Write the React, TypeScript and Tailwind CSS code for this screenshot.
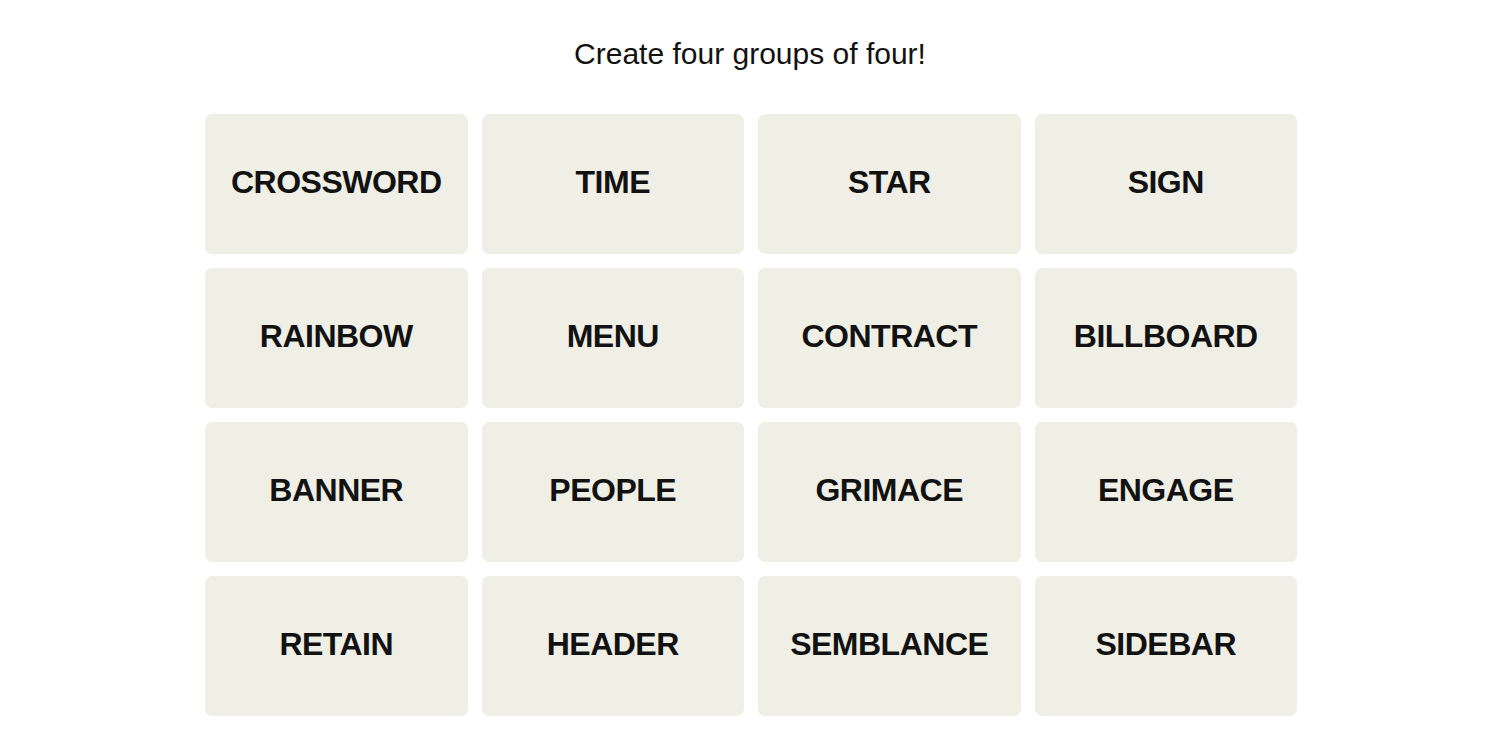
import React from "react";

const words = [
  "CROSSWORD", "TIME", "STAR", "SIGN",
  "RAINBOW", "MENU", "CONTRACT", "BILLBOARD",
  "BANNER", "PEOPLE", "GRIMACE", "ENGAGE",
  "RETAIN", "HEADER", "SEMBLANCE", "SIDEBAR",
];

export default function App() {
  return (
    <div className="w-[1500px] h-[729px] bg-white overflow-hidden flex flex-col items-center" style={{ fontFamily: '"Liberation Sans", Arial, sans-serif' }}>
      <h1 className="mt-[36px] h-[36px] leading-[36px] text-[30px] font-normal text-[#121212]">Create four groups of four!</h1>
      <div className="mt-[42px] ml-[2px] w-[1092px] grid grid-cols-4 gap-[14px]">
        {words.map((w) => (
          <div key={w} className="h-[140px] rounded-[7px] bg-[#efefe6] flex items-center justify-center pb-[4px]">
            <span className="text-[32px] font-bold tracking-[-0.5px] text-[#121212] leading-none">{w}</span>
          </div>
        ))}
      </div>
    </div>
  );
}
